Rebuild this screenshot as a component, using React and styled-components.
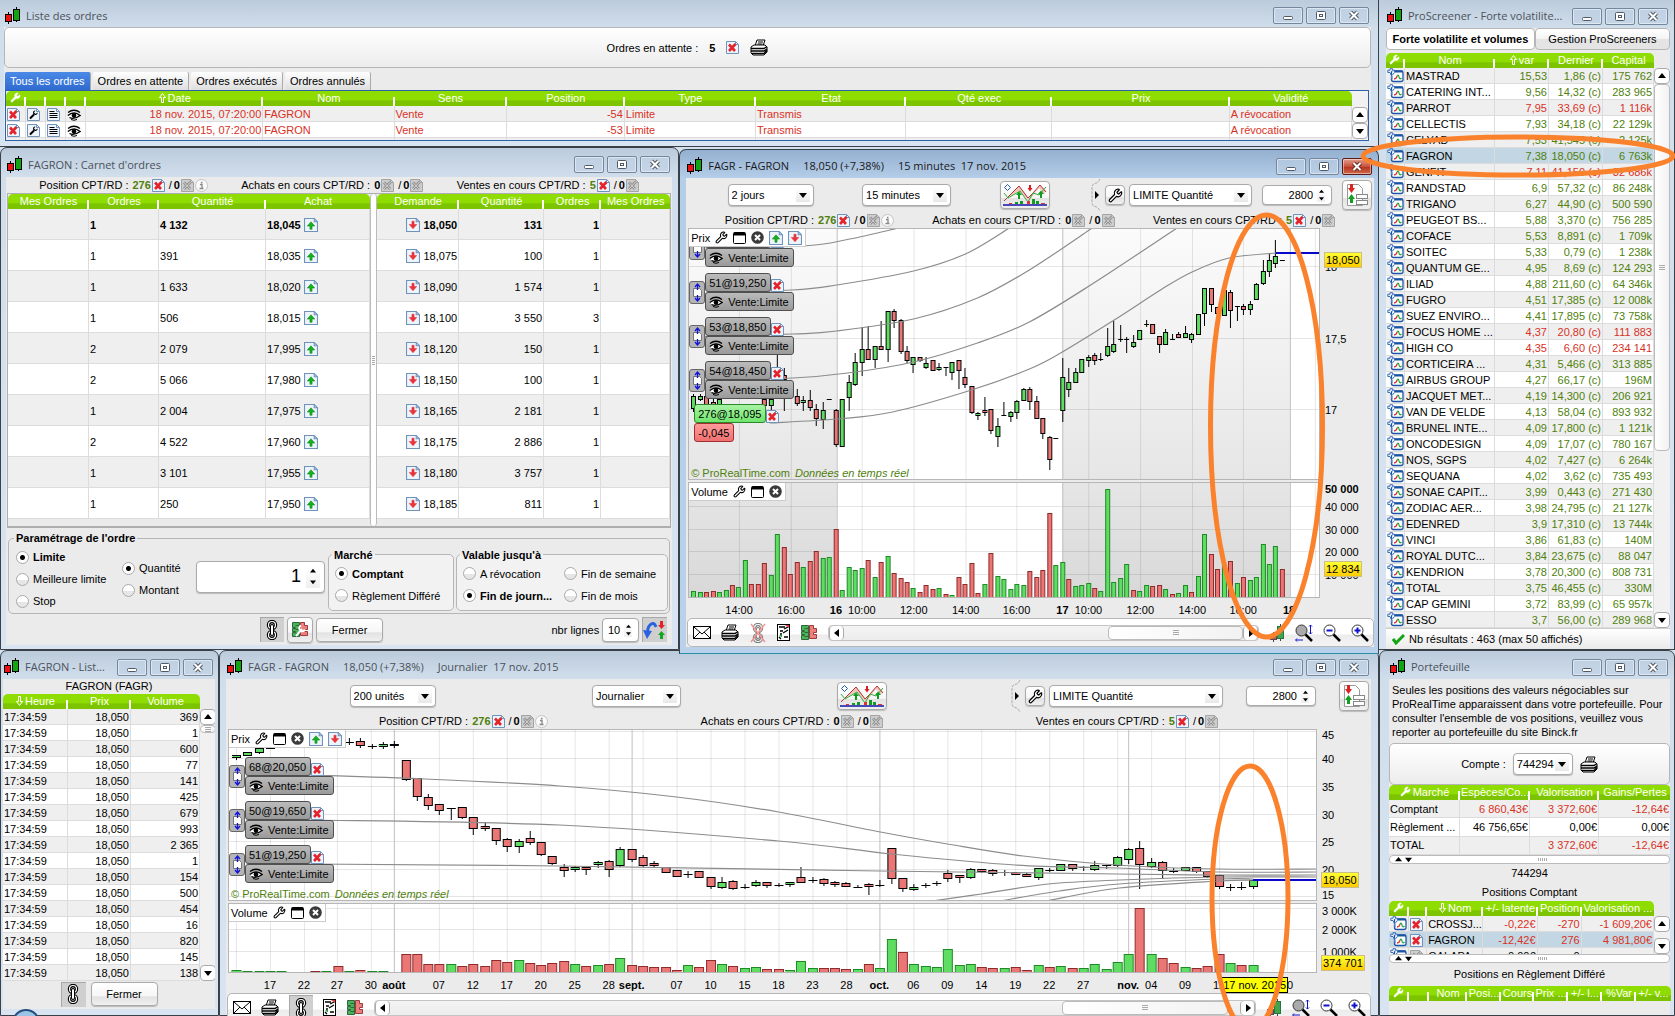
import React from "react";
import styled, { createGlobalStyle, css } from "styled-components";
import { Wrench } from "lucide-react";

/* ---------- palette ---------- */
const c = {
  body: "#ebebeb",
  line: "#b6b6b6",
  cell: "#dcdcdc",
  green: "#4f7f0c",
  red: "#d8321f",
  up: "#5fdc62",
  down: "#ea7676",
  orange: "#fb822c",
};

const Global = createGlobalStyle`
  * { box-sizing: border-box; }
  html, body { margin: 0; height: 100%; overflow: hidden; }
  body { background: #d3e0ee; font: 11px/14px "Liberation Sans", Arial, sans-serif; color: #000; }
  button, input, select { font: inherit; color: inherit; margin: 0; padding: 0; }
  p, h1, h2 { margin: 0; font: inherit; }
  svg { display: block; flex: none; }
`;

/* ---------- desktop ---------- */
const Desktop = styled.main`
  position: relative;
  display: flex;
  height: 100vh;
  overflow: hidden;
`;
const Column = styled.div`
  display: flex;
  flex-direction: column;
  min-width: 0;
  flex: ${(p) => (p.$width ? `0 0 ${p.$width}px` : 1)};
`;
const WindowRow = styled.div`
  display: flex;
  align-items: flex-start;
  min-width: 0;
  ${(p) => p.$last && "flex: 1; min-height: 0; align-items: stretch; margin-top: -4px;"}
`;

/* ---------- window chrome ---------- */
const Frame = styled.section`
  display: flex;
  flex-direction: column;
  min-width: 0;
  position: relative;
  border: 1px solid #3a4048;
  border-radius: 7px 7px 0 0;
  padding: ${(p) => p.$pad || "0 6px 4px 6px"};
  background: ${(p) =>
    p.$active
      ? "linear-gradient(#94b0d0, #b4cde8 28px, #b9d1ea)"
      : "linear-gradient(#bccbdb, #d0deec 28px, #d8e4f1)"};
  ${(p) => p.$active && "z-index: 1; margin-top: 2px; border-bottom-color: #2a8fa8;"}
  ${(p) => p.$top && "border-top: 0; border-left: 0; border-radius: 0;"}
  ${(p) => p.$grow && `flex: ${p.$grow};`}
  ${(p) => p.$width && `flex: 0 0 ${p.$width}px;`}
`;
const TitleBar = styled.header`
  display: flex;
  align-items: center;
  gap: 3px;
  flex: none;
  height: ${(p) => p.$h || 28}px;
  padding: 4px 2px 0 1px;
  color: ${(p) => (p.$active ? "#1a1a1a" : "#4b525a")};
`;
const Title = styled.h1`
  flex: 1;
  min-width: 0;
  display: flex;
  gap: 14px;
  padding-left: 2px;
  font: 11px/16px "Open Sans", "Noto Sans", sans-serif;
  white-space: pre;
  overflow: hidden;
`;
const WinButton = styled.button`
  width: 30px;
  height: 17px;
  flex: none;
  display: grid;
  place-items: center;
  border: 1px solid ${(p) => (p.$close ? "#5c1b18" : "#75879c")};
  border-radius: 2px;
  box-shadow: inset 0 0 0 1px rgba(255, 255, 255, 0.45);
  background: ${(p) => (p.$close ? "linear-gradient(#e0a08f, #c9513c 50%, #b5321c 52%, #cf6a4c)" : "rgba(190,208,228,.6)")};
`;
const Body = styled.div`
  display: flex;
  flex-direction: column;
  flex: 1;
  min-height: 0;
  min-width: 0;
  background: ${c.body};
`;

const AppIcon = () => (
  <svg width="16" height="18" viewBox="0 0 16 18">
    <path d="M3.5 5v12M11.5 0v15" stroke="#000" />
    <rect x="0.5" y="7.5" width="6" height="7" fill="#e11" stroke="#000" />
    <rect x="8.5" y="2.5" width="6" height="11" fill="#12a512" stroke="#000" />
  </svg>
);
const Glyph = ({ kind, light }) => {
  const stroke = light ? "#6d2a20" : "#505a66";
  return (
    <svg width="12" height="11" viewBox="0 0 12 11">
      {kind === "min" && <rect x="1.5" y="6.5" width="9" height="3" rx="1" fill="#fff" stroke={stroke} />}
      {kind === "max" && (
        <>
          <rect x="1.5" y="1.5" width="9" height="8" rx="1" fill="#fff" stroke={stroke} />
          <rect x="4.5" y="4.5" width="3" height="2" fill="#fff" stroke={stroke} />
        </>
      )}
      {kind === "close" && (
        <>
          <path d="M2.5 2l7 7M9.5 2l-7 7" stroke={stroke} strokeWidth="4" />
          <path d="M2.5 2l7 7M9.5 2l-7 7" stroke="#fff" strokeWidth="2" />
        </>
      )}
    </svg>
  );
};
function Window({ parts, active, titleHeight, children, ...rest }) {
  return (
    <Frame $active={active} {...rest}>
      <TitleBar $active={active} $h={titleHeight}>
        <AppIcon />
        <Title>
          {parts.map((t) => (
            <span key={t}>{t}</span>
          ))}
        </Title>
        <WinButton aria-label="Réduire"><Glyph kind="min" /></WinButton>
        <WinButton aria-label="Agrandir"><Glyph kind="max" /></WinButton>
        <WinButton aria-label="Fermer la fenêtre" $close={active}><Glyph kind="close" light={active} /></WinButton>
      </TitleBar>
      <Body>{children}</Body>
    </Frame>
  );
}

/* ---------- icons ---------- */
const Sheet = ({ grey }) => (
  <>
    <path
      d="M0.5 0.5h9l3 3v9h-12z"
      fill={grey ? "#cdcdcd" : "#eef4fb"}
      stroke={grey ? "#a5a5a5" : "#6f93bb"}
    />
    <path d="M9.5 0.5v3h3" fill="none" stroke={grey ? "#a5a5a5" : "#6f93bb"} />
  </>
);
const DocX = ({ grey }) => (
  <svg width="13" height="13" viewBox="0 0 13 13">
    <Sheet grey={grey} />
    <path d="M3 3.5l6 6.5M9.5 3l-6.500 7" stroke={grey ? "#8d8d8d" : "#e5232b"} strokeWidth="2.6" />
    {grey && <path d="M3 3.5l6 6.5M9.5 3l-6.5 7" stroke="#d9d9d9" strokeWidth="1" />}
  </svg>
);
const DocArrow = ({ down }) => (
  <svg width="14" height="14" viewBox="0 0 13 13">
    <Sheet />
    {down ? (
      <path d="M5.500 3h2v3h2.500L6.500 10 3 6h2.500z" fill="#e8333b" stroke="#e8333b" strokeWidth="0.5" />
    ) : (
      <path d="M5.500 10.500h2V7.500h2.500L6.500 3.500 3 7.500h2.500z" fill="#17b01f" stroke="#0d8a14" strokeWidth="0.5" />
    )}
  </svg>
);
const DocWrench = () => (
  <svg width="13" height="13" viewBox="0 0 13 13">
    <Sheet />
    <path d="M3 10.5L7 6.5" stroke="#000" strokeWidth="2" />
    <path d="M10.5 4.5L8.5 6 7 4.5 8.5 2.5C6 2 5.5 4.5 6.5 6.5 9 7.5 11 6.5 10.5 4.5z" fill="#000" />
  </svg>
);
const DocText = () => (
  <svg width="13" height="13" viewBox="0 0 13 13">
    <Sheet />
    <path d="M2.5 3.5h5M2.5 5.5h8M2.5 7.5h8M2.5 9.5h8" stroke="#000" />
  </svg>
);
const Eye = () => (
  <svg width="14" height="12" viewBox="0 0 14 12">
    <path d="M1 3.5Q7-1 13 3.5" fill="none" stroke="#000" strokeWidth="1.3" />
    <path d="M0.8 6.5Q7 1.5 13.2 6.5 7 11 2.5 8.5" fill="#fff" stroke="#000" strokeWidth="1.3" />
    <circle cx="7" cy="6.6" r="2.3" fill="#000" />
    <path d="M4 10.5q3 1.5 6 0" stroke="#000" fill="none" />
  </svg>
);
const InfoDot = () => (
  <svg width="13" height="13" viewBox="0 0 13 13">
    <circle cx="6.5" cy="6.5" r="6" fill="#fafafa" stroke="#c4c4c4" />
    <path d="M5 5.5h2v4M4.5 9.5h4M6 3.5h1.5" stroke="#888" strokeWidth="1.3" fill="none" />
  </svg>
);
const Printer = () => (
  <svg width="18" height="17" viewBox="0 0 18 17">
    <path d="M5 7L7 1h8l-2 6z" fill="#fff" stroke="#000" />
    <path d="M8 3h5M7.5 5h5" stroke="#000" />
    <path d="M1 8l3-2h11l2 2v5l-3 3H3l-2-2z" fill="#fff" stroke="#000" />
    <path d="M1 9.5h13l3-2M1 12h13l3-2M2 14.5h12l3-3" stroke="#000" strokeWidth="1.5" fill="none" />
  </svg>
);
const Envelope = () => (
  <svg width="18" height="13" viewBox="0 0 18 13">
    <rect x="0.5" y="0.5" width="17" height="12" fill="#fff" stroke="#000" />
    <path d="M1 1l8 7 8-7M1 12l6-6M17 12l-6-6" fill="none" stroke="#000" />
  </svg>
);
const Chain = ({ off }) => (
  <svg width="18" height="20" viewBox="0 0 18 20" opacity={off ? 0.5 : 1}>
    <ellipse cx="9" cy="5" rx="3.5" ry="3.5" fill="none" stroke="#000" strokeWidth="3.4" />
    <ellipse cx="9" cy="15" rx="3.5" ry="3.5" fill="none" stroke="#000" strokeWidth="3.4" />
    <ellipse cx="9" cy="5" rx="3.5" ry="3.5" fill="none" stroke="#fff" strokeWidth="1.2" />
    <ellipse cx="9" cy="15" rx="3.5" ry="3.5" fill="none" stroke="#fff" strokeWidth="1.2" />
    <rect x="7.5" y="4.5" width="3" height="11" rx="1.5" fill="#fff" stroke="#000" />
    {off && <path d="M2 1l14 18M16 1L2 19" stroke="#e33" strokeWidth="1.5" />}
  </svg>
);
const Checklist = () => (
  <svg width="13" height="17" viewBox="0 0 13 17">
    <rect x="0.5" y="0.5" width="12" height="16" fill="#fff" stroke="#000" />
    <path d="M2 3h6M3 7h3M3 10h2M7 13h4" stroke="#000" strokeWidth="1.5" />
    <path d="M7 5l4-2M6 9l5-3M2 13l2 2" stroke="#000" strokeWidth="1.3" />
    <path d="M2 12l3-2v3z" fill="#1b9d2b" />
    <path d="M8 1h4v3z" fill="#e33" />
  </svg>
);
const BookIcon = ({ tool }) => (
  <svg width="18" height="17" viewBox="0 0 18 17">
    <path d="M1.5 1.5h7v14h-7v-4h3v-1h-3v-3h3v-1h-3z" fill="#47b45a" stroke="#33653b" />
    <path d="M9.5 1.5h4v3h3v4h-3v2h3v4h-7z" fill="#ee7d7d" stroke="#9a3c3c" />
    <path d="M4.500 4.5h5M4.500 8.500h5M4.500 12.500h5" stroke="#33653b" />
    {tool && <path d="M5 15l6-7M10 4.500a3 3 0 1 0 4 4" stroke="#fff" strokeWidth="2" fill="none" />}
  </svg>
);
const ChainChart = () => (
  <svg width="17" height="15" viewBox="0 0 17 15">
    <rect x="4.5" y="3" width="11.500" height="10.500" rx="2" fill="#fff" stroke="#1c54a4" strokeWidth="1.3" />
    <path d="M8 3.500h8" stroke="#1c54a4" strokeWidth="2" />
    <path d="M7 11q2.500 0 3-3" fill="none" stroke="#d33" strokeWidth="1.3" />
    <path d="M10 8q1.500-2 2 1t2.500 1" fill="none" stroke="#22a63a" strokeWidth="1.3" />
    <path d="M3 0.700v1.500H0.800v2.300H3L5 8.500v3M5.500 0.700h-2.500M5.500 0.700v1.500h2v2.300L5 7.500" fill="#e4effb" stroke="#3a6fc0" />
  </svg>
);
const ArrowGlyph = ({ down }) => (
  <svg width="7" height="10" viewBox="0 0 7 10">
    <path
      d={down ? "M2.5 0.5h2v5h2l-3 4-3-4h2z" : "M2.5 9.5h2v-5h2l-3-4-3 4h2z"}
      fill="none" stroke="#fff"
    />
  </svg>
);
const PanelIcon = () => (
  <svg width="13" height="12" viewBox="0 0 13 12">
    <rect x="0.5" y="0.5" width="12" height="11" rx="1" fill="#fff" stroke="#000" />
    <path d="M1 2h11" stroke="#000" strokeWidth="3" />
  </svg>
);
const CloseDot = () => (
  <svg width="13" height="13" viewBox="0 0 13 13">
    <circle cx="6.5" cy="6.5" r="6.3" fill="#3b3b3b" />
    <path d="M4 4l5 5M9 4l-5 5" stroke="#fff" strokeWidth="2" />
  </svg>
);
const Lens = ({ sign }) => (
  <svg width="18" height="18" viewBox="0 0 18 18">
    <circle cx="6.5" cy="6.5" r="5.5" fill={sign ? "#fff" : "#aaa"} stroke="#333" />
    <path d="M10.5 10.5l6.5 6.5" stroke="#000" strokeWidth="2.5" />
    {sign && <path d="M3.5 6.5h6" stroke="#11c" strokeWidth="2" />}
    {sign === "+" && <path d="M6.5 3.5v6" stroke="#11c" strokeWidth="2" />}
    {!sign && <path d="M1 16h7M2 14.5L0.5 16 2 17.5M15.5 1v9M14 2.5L15.5 1 17 2.5M14 8.5l1.5 1.5 1.5-1.5" stroke="#11c" fill="none" />}
  </svg>
);
const CandleTool = () => (
  <svg width="16" height="18" viewBox="0 0 16 18">
    <path d="M4.5 8v10M11.5 0v17" stroke="#444" />
    <rect x="1.5" y="10.5" width="6" height="5" fill="#a66" stroke="#644" />
    <rect x="8.5" y="2.5" width="6" height="12" fill="#3fa44a" stroke="#274" />
  </svg>
);
const Indicators = () => (
  <svg width="44" height="22" viewBox="0 0 44 22">
    <path d="M1 17L8 10 16 2 21 8 25 14 30 9 37 1 43 7 41 10 36 4 26 17 16 7 4 14z" fill="#f3c5bf" />
    <path d="M1 17L8 10 16 2 25 14 30 9 37 1 43 8" fill="none" stroke="#b2322e" />
    <path d="M1 9l4 5 12-7 8 11 5-9 6 2 7-8" fill="none" stroke="#2eae3a" />
    <path d="M4.5 0.5l3 3-3 3-3-3z" fill="#fff" stroke="#2255bb" />
    <path d="M26 1h2v3h1.5L27 7.5 24.5 4H26z" fill="#d81e1e" />
    <path d="M15 15v-4h-2l3-3.5 3 3.5h-2v4zM37 14v-4h-2l3-3.5 3 3.5h-2v4z" fill="#139a22" />
    <path d="M6 20v-1h3v1zM24 20v-3h3v3zM38 20v-1h4v1z" fill="#d33" />
    <path d="M12 20v-2h3v2zM17 20v-3h3v3zM29 20v-5h3v5zM33 20v-3h3v3z" fill="#139a22" />
    <path d="M0 21h44" stroke="#1212a8" strokeWidth="1.5" />
  </svg>
);
const SplitDoc = () => (
  <svg width="24" height="24" viewBox="0 0 24 24">
    <path d="M2.5 1.5h11l4 4v17h-15z" fill="#fff" stroke="#999" />
    <path d="M5 1h3v4h2L6.5 10 3 5h2z" fill="#de2222" />
    <path d="M5 20h3v-4h2l-3.5-5L3 16h2z" fill="#12a11f" />
    <rect x="11.5" y="11.5" width="11" height="4" fill="#fff" stroke="#888" />
    <rect x="11.5" y="17.5" width="11" height="4" fill="#fff" stroke="#888" />
  </svg>
);
const Recenter = () => (
  <svg width="23" height="20" viewBox="0 0 23 20">
    <path d="M13 7Q11 1 7 5 4 8 5 13" fill="none" stroke="#2b62e0" strokeWidth="3" />
    <path d="M0 10l9 1-5 8z" fill="#2b62e0" />
    <path d="M17 1h3v4h2l-3.5 4L15 5h2z" fill="#e02424" />
    <path d="M17 19h3v-4h2l-3.5-4L15 15h2z" fill="#14a522" />
  </svg>
);
const MoveIcon = () => (
  <svg width="9" height="19" viewBox="0 0 9 19">
    <path d="M0.5 5.5h6l2 2v6h-8z" fill="#fff" stroke="#777" />
    <path d="M4.5 1v6M4.5 18v-6M2 4l2.5-3L7 4M2 15l2.5 3L7 15" stroke="#1414d8" strokeWidth="1.3" fill="none" />
  </svg>
);
const Triangle = ({ dir = "down", size = 8 }) => {
  const d = { down: "M0 2h8L4 7z", up: "M0 6h8L4 1z", left: "M6 0v8L1 4z", right: "M2 0v8l5-4z" }[dir];
  return (
    <svg width={size} height={size} viewBox="0 0 8 8">
      <path d={d} fill="#000" />
    </svg>
  );
};
const Check = () => (
  <svg width="13" height="12" viewBox="0 0 13 12">
    <path d="M1 6l3 4L12 2" fill="none" stroke="#14a514" strokeWidth="3" />
  </svg>
);

/* ---------- controls ---------- */
const raised = css`
  border: 1px solid #aaa;
  border-radius: 4px;
  background: linear-gradient(#fff, #f6f6f6 60%, #e2e2e2 62%, #f0f0f0);
  box-shadow: 0 1px 1px #bbb;
`;
const PushButton = styled.button`
  ${raised}
  width: 67px;
  height: 24px;
`;
const IconButton = styled.button`
  ${(p) => (p.$pressed ? "border: 0; background: #cfcfcf; box-shadow: inset 1px 1px 0 #a8a8a8;" : raised)}
  display: grid;
  place-items: center;
  flex: none;
  width: ${(p) => p.$w}px;
  height: ${(p) => p.$h}px;
`;
const BareButton = styled.button`
  display: flex;
  border: 0;
  background: none;
`;
const SelectBox = styled.label`
  position: relative;
  display: flex;
  flex: none;
  width: ${(p) => p.$w}px;
  height: 22px;
  border: 1px solid #aaa;
  border-radius: 4px;
  background: #fff;
  box-shadow: 0 1px 1px #bbb;
  select {
    appearance: none;
    width: 100%;
    border: 0;
    background: none;
    padding-left: 3px;
    outline: 0;
  }
  span {
    position: absolute;
    right: 3px;
    top: 3px;
    width: 14px;
    height: 14px;
    display: grid;
    place-items: center;
    background: linear-gradient(#fff, #e8e8e8);
    pointer-events: none;
  }
`;
const Select = ({ value, w, label }) => (
  <SelectBox $w={w}>
    <select aria-label={label} defaultValue={value}>
      <option>{value}</option>
    </select>
    <span><Triangle /></span>
  </SelectBox>
);
const SpinBox = styled.label`
  display: flex;
  align-items: center;
  flex: none;
  width: ${(p) => p.$w}px;
  height: ${(p) => p.$h || 20}px;
  padding-right: ${(p) => (p.$big ? 4 : 6)}px;
  gap: ${(p) => (p.$big ? 5 : 4)}px;
  border: 1px solid #aaa;
  border-radius: 4px;
  background: #fff;
  box-shadow: 0 1px 1px #bbb;
  input {
    flex: 1;
    min-width: 0;
    border: 0;
    outline: 0;
    background: none;
    text-align: right;
    ${(p) => p.$big && "font-size: 18px;"}
  }
  span {
    display: flex;
    flex-direction: column;
    align-items: center;
    justify-content: space-around;
    width: ${(p) => (p.$big ? 14 : 8)}px;
    height: ${(p) => (p.$big ? 22 : 14)}px;
    background: linear-gradient(#fff, #efefef);
  }
`;
const Spin = ({ value, w, h, big, label }) => (
  <SpinBox $w={w} $h={h} $big={big}>
    <input aria-label={label} defaultValue={value} />
    <span>
      <Triangle dir="up" size={big ? 6 : 5} />
      <Triangle size={big ? 6 : 5} />
    </span>
  </SpinBox>
);
const RadioLabel = styled.label`
  display: flex;
  align-items: center;
  gap: 4px;
  height: 22px;
  white-space: nowrap;
  font-weight: ${(p) => (p.$strong ? "bold" : "normal")};
  input {
    appearance: none;
    flex: none;
    width: 13px;
    height: 13px;
    border: 1px solid #aaa;
    border-radius: 50%;
    background: linear-gradient(#fff 50%, #e6e6e6 52%);
  }
  input:checked {
    background: radial-gradient(circle, #000 2px, #fff 3px);
  }
`;
const Radio = ({ name, text, checked, strong }) => (
  <RadioLabel $strong={strong}>
    <input type="radio" name={name} defaultChecked={checked} />
    {text}
  </RadioLabel>
);

/* ---------- position summary ---------- */
const SummaryRow = styled.div`
  display: flex;
  justify-content: space-evenly;
  align-items: center;
  flex: none;
  height: 16px;
  white-space: nowrap;
`;
const SummaryItem = styled.div`
  display: flex;
  align-items: center;
  gap: 1px;
  b { margin-left: 3px; }
  i { font-style: normal; margin-left: 3px; }
  i + b { margin-left: 1px; }
`;
const Positive = styled.b`
  color: ${c.green};
`;
const Summary = () => (
  <SummaryRow>
    <SummaryItem>
      Position CPT/RD :<Positive>276</Positive><DocX /><i>/</i><b>0</b><DocX grey /><InfoDot />
    </SummaryItem>
    <SummaryItem>
      Achats en cours CPT/RD :<b>0</b><DocX grey /><i>/</i><b>0</b><DocX grey />
    </SummaryItem>
    <SummaryItem>
      Ventes en cours CPT/RD :<Positive>5</Positive><DocX /><i>/</i><b>0</b><DocX grey />
    </SummaryItem>
  </SummaryRow>
);

/* ---------- tables ---------- */
const Table = styled.table`
  table-layout: fixed;
  width: 100%;
  border-collapse: separate;
  border-spacing: 0;
  white-space: nowrap;
  th {
    height: 15px;
    padding: 0 1px;
    font-weight: normal;
    line-height: 13px;
    color: #fff;
    overflow: hidden;
    background: linear-gradient(#8fdc00 0 62%, #7cc400 64%);
  }
  th:not(:last-child) {
    background: linear-gradient(#fff, #fff) right bottom / 2px 9px no-repeat,
      linear-gradient(#8fdc00 0 62%, #7cc400 64%);
  }
  th:first-child { border-top-left-radius: 5px; }
  th:last-child { border-top-right-radius: 5px; }
  th svg { display: inline-block; vertical-align: -1px; margin-right: 2px; }
  td {
    height: ${(p) => p.$row || 16}px;
    padding: ${(p) => (p.$row === 31 ? 1 : 0)}px 1px 0;
    border-right: 1px solid ${c.cell};
    border-bottom: 1px solid ${c.cell};
    overflow: hidden;
  }
  td svg { display: inline-block; vertical-align: -3px; }
`;
const Row = styled.tr`
  background: ${(p) => (p.$selected ? "#c2d7e3" : p.$odd ? "#fff" : "#efefef")};
  ${(p) => p.$strong && "font-weight: bold;"}
`;
const Cell = styled.td`
  color: ${(p) => p.$color || "inherit"};
  text-align: ${(p) => (p.$right ? "right" : p.$center ? "center" : "left")};
`;
const Cols = ({ widths }) => (
  <colgroup>
    {widths.map((w, i) => (
      <col key={i} style={{ width: w }} />
    ))}
  </colgroup>
);
const HeadWrench = () => <Wrench size={11} color="#fff" fill="#fff" strokeWidth={1} aria-hidden />;

const Scroll = styled.div`
  display: flex;
  flex-direction: column;
  flex: none;
  width: 16px;
  background: #f1f1f1;
`;
const ScrollButton = styled.button`
  border: 1px solid #aaa;
  border-radius: 4px;
  background: #fff;
  display: grid;
  place-items: center;
  flex: none;
  width: 16px;
  height: 16px;
`;
const Thumb = styled.div`
  flex: ${(p) => p.$size};
  border: 1px solid #bbb;
  border-radius: 4px;
  background: linear-gradient(90deg, #fff, #f2f2f2);
  display: grid;
  place-items: center;
`;
const Gap = styled.div`
  flex: ${(p) => p.$size};
`;
const Grip = styled.i`
  width: 6px;
  height: 5px;
  border: 1px solid #aaa;
  border-width: 1px 0;
  background: linear-gradient(transparent 1px, #aaa 1px 2px, transparent 2px);
`;

/* ---------- orders list ---------- */
const Panel = styled.div`
  display: flex;
  align-items: center;
  justify-content: center;
  flex: none;
  gap: ${(p) => p.$gap}px;
  height: ${(p) => p.$h || 41}px;
  border: 1px solid ${c.line};
  border-radius: 5px;
  background: linear-gradient(#fff, #ececec);
`;
const Tabs = styled.div`
  display: flex;
  align-items: flex-end;
  gap: 2px;
  height: 22px;
  padding-left: 1px;
`;
const Tab = styled.button`
  height: 18px;
  padding: 0 5px;
  white-space: nowrap;
  border: 0;
  border-right: 1px solid #aaa;
  border-radius: 2px 2px 0 0;
  background: ${(p) => (p.$on ? "linear-gradient(#4a8ae6, #2f6bd0)" : "linear-gradient(#fff, #dedede)")};
  color: ${(p) => (p.$on ? "#fff" : "#000")};
`;
const Framed = styled.div`
  display: flex;
  margin: 0 2px 0 1px;
  height: 51px;
  overflow: hidden;
  border: 1px solid #2d62a8;
  background: #efefef;
`;
const OrdersScroll = styled(Scroll)`
  padding-top: 16px;
`;
const IconCell = styled(Cell)`
  && { padding: 0 1px; }
`;

function OrdersWindow() {
  const heads = ["Date", "Nom", "Sens", "Position", "Type", "Etat", "Qté exec", "Prix", "Validité"];
  const rows = ["-54", "-53", ""];
  return (
    <Window parts={["Liste des ordres"]} $top $pad="0 7px 5px 4px" titleHeight={27}>
      <Panel $gap={11}>
        <span>Ordres en attente :</span><b>5</b><DocX /><Printer />
      </Panel>
      <Tabs>
        <Tab $on>Tous les ordres</Tab>
        <Tab>Ordres en attente</Tab>
        <Tab>Ordres exécutés</Tab>
        <Tab>Ordres annulés</Tab>
      </Tabs>
      <Framed>
        <Table>
          <Cols widths={[20, 20, 20, 20, 177, 131, 112, 118, 131, 150, 146, 177, 122]} />
          <thead>
            <tr>
              <th><HeadWrench /></th><th /><th /><th />
              {heads.map((h, i) => (
                <th key={h}>{i === 0 && <ArrowGlyph />}{h}</th>
              ))}
            </tr>
          </thead>
          <tbody>
            {rows.map((pos, i) =>
              pos ? (
                <Row key={i} $odd={i % 2}>
                  <Cell><DocX /></Cell><Cell><DocWrench /></Cell><Cell><DocText /></Cell><Cell><Eye /></Cell>
                  <Cell $right $color={c.red}>18 nov. 2015, 07:20:00</Cell>
                  <Cell $color={c.red}>FAGRON</Cell>
                  <Cell $color={c.red}>Vente</Cell>
                  <Cell $right $color={c.red}>{pos}</Cell>
                  <Cell $color={c.red}>Limite</Cell>
                  <Cell $color={c.red}>Transmis</Cell>
                  <Cell /><Cell />
                  <Cell $color={c.red}>A révocation</Cell>
                </Row>
              ) : (
                <Row key={i}>
                  {Array.from({ length: 13 }, (_, k) => <Cell key={k} />)}
                </Row>
              )
            )}
          </tbody>
        </Table>
        <OrdersScroll>
          <ScrollButton aria-label="Monter"><Triangle dir="up" /></ScrollButton>
          <ScrollButton aria-label="Descendre"><Triangle /></ScrollButton>
        </OrdersScroll>
      </Framed>
    </Window>
  );
}

/* ---------- order book ---------- */
const Book = styled.div`
  display: flex;
  flex: none;
  margin: 0 1px;
  border: 1px solid #aeaeae;
  border-bottom-width: 2px;
  padding-bottom: 7px;
`;
const BookSide = styled.div`
  flex: ${(p) => p.$size};
  min-width: 0;
`;
const Splitter = styled.div`
  flex: 0 0 7px;
  margin-bottom: -7px;
  border: 1px solid #bbb;
  border-width: 0 1px;
  border-radius: 4px;
  background: #fff;
  display: grid;
  place-items: center;
  i { width: 3px; height: 9px; background: repeating-linear-gradient(#aaa 0 1px, #fff 1px 2px); }
`;
const AskLine = styled.span`
  margin-left: 3px;
`;
const OrderForm = styled.fieldset`
  display: flex;
  align-items: center;
  flex: none;
  margin: 3px 2px 0;
  padding: 1px 1px 1px 7px;
  border: 1px solid ${c.line};
  border-radius: 5px;
  legend { padding: 0 2px; margin-left: -2px; font-weight: bold; }
`;
const SubForm = styled.fieldset`
  flex: ${(p) => p.$flex};
  display: grid;
  grid-template-columns: ${(p) => (p.$two ? "101px 1fr" : "1fr")};
  margin: 0 0 0 ${(p) => (p.$two ? 2 : 3)}px;
  padding: 1px 0 3px 6px;
  border: 1px solid ${c.line};
  border-radius: 5px;
  background: #f2f2f2;
  legend { margin-left: -3px; font-weight: bold; }
`;
const RadioStack = styled.div`
  flex: 0 0 ${(p) => p.$w}px;
`;
const AmountSlot = styled.div`
  padding-bottom: 5px;
`;
const BookFooter = styled.div`
  display: grid;
  grid-template-columns: 254fr auto 284fr;
  align-items: center;
  height: 31px;
  padding-right: 5px;
`;
const Cluster = styled.div`
  display: flex;
  align-items: center;
  gap: 3px;
  ${(p) => p.$end && "justify-content: flex-end;"}
`;
const bids = [[1, "4 132", "18,045"], [1, "391", "18,035"], [1, "1 633", "18,020"], [1, "506", "18,015"], [2, "2 079", "17,995"], [2, "5 066", "17,980"], [1, "2 004", "17,975"], [2, "4 522", "17,960"], [1, "3 101", "17,955"], [1, "250", "17,950"]];
const asks = [["18,050", "131", 1], ["18,075", "100", 1], ["18,090", "1 574", 1], ["18,100", "3 550", 3], ["18,120", "150", 1], ["18,150", "100", 1], ["18,165", "2 181", 1], ["18,175", "2 886", 1], ["18,180", "3 757", 1], ["18,185", "811", 1]];

function BookWindow() {
  return (
    <Window parts={["FAGRON : Carnet d'ordres"]} $grow="679 0 0" titleHeight={29} $pad="0 6px 4px 5px">
      <Summary />
      <Book>
        <BookSide $size={362}>
          <Table $row={31}>
            <Cols widths={[81, 70, 107, 104]} />
            <thead><tr><th>Mes Ordres</th><th>Ordres</th><th>Quantité</th><th>Achat</th></tr></thead>
            <tbody>
              {bids.map(([n, q, p], i) => (
                <Row key={p} $odd={i % 2} $strong={i === 0}>
                  <Cell /><Cell>{n}</Cell><Cell>{q}</Cell>
                  <Cell>{p} <DocArrow /></Cell>
                </Row>
              ))}
            </tbody>
          </Table>
        </BookSide>
        <Splitter><i /></Splitter>
        <BookSide $size={293}>
          <Table $row={31}>
            <Cols widths={[82, 85, 57, 69]} />
            <thead><tr><th>Demande</th><th>Quantité</th><th>Ordres</th><th>Mes Ordres</th></tr></thead>
            <tbody>
              {asks.map(([p, q, n], i) => (
                <Row key={p} $odd={i % 2} $strong={i === 0}>
                  <Cell $right><DocArrow down /><AskLine>{p}</AskLine></Cell>
                  <Cell $right>{q}</Cell><Cell $right>{n}</Cell><Cell />
                </Row>
              ))}
            </tbody>
          </Table>
        </BookSide>
      </Book>
      <OrderForm>
        <legend>Paramétrage de l'ordre</legend>
        <RadioStack $w={106}>
          <Radio name="kind" text="Limite" checked strong />
          <Radio name="kind" text="Meilleure limite" />
          <Radio name="kind" text="Stop" />
        </RadioStack>
        <RadioStack $w={74}>
          <Radio name="unit" text="Quantité" checked />
          <Radio name="unit" text="Montant" />
        </RadioStack>
        <AmountSlot><Spin value="1" w={129} h={32} big label="Quantité à passer" /></AmountSlot>
        <SubForm $flex="0 0 126px">
          <legend>Marché</legend>
          <Radio name="market" text="Comptant" checked strong />
          <Radio name="market" text="Règlement Différé" />
        </SubForm>
        <SubForm $flex="1" $two>
          <legend>Valable jusqu'à</legend>
          <Radio name="valid" text="A révocation" />
          <Radio name="valid" text="Fin de semaine" />
          <Radio name="valid" text="Fin de journ..." checked strong />
          <Radio name="valid" text="Fin de mois" />
        </SubForm>
      </OrderForm>
      <BookFooter>
        <span />
        <Cluster>
          <IconButton $pressed $w={24} $h={25} aria-label="Lier"><Chain /></IconButton>
          <IconButton $w={26} $h={26} aria-label="Options du carnet"><BookIcon tool /></IconButton>
          <PushButton>Fermer</PushButton>
        </Cluster>
        <Cluster $end>
          <span>nbr lignes</span>
          <Spin value="10" w={37} h={24} label="nbr lignes" />
          <IconButton $pressed $w={25} $h={25} aria-label="Recentrer"><Recenter /></IconButton>
        </Cluster>
      </BookFooter>
    </Window>
  );
}

/* ---------- charts ---------- */
const Toolbar = styled.div`
  display: flex;
  align-items: center;
  flex: none;
  height: 34px;
  padding-right: 2px;
`;
const ToolGroup = styled.div`
  display: flex;
  align-items: center;
  gap: ${(p) => p.$gap}px;
`;
const Bracket = () => (
  <svg width="10" height="34" viewBox="0 0 10 34">
    <path d="M9 1q-2 4-5 4.5Q1 6 1 10v14q0 4 3 4.5 3 .5 5 4.5" fill="none" stroke="#aaa" strokeDasharray="3 1" />
    <path d="M4 13v8l4-4z" fill="#000" />
  </svg>
);
const ChartGrid = styled.div`
  display: grid;
  grid-template-columns: 1fr 54px;
  grid-template-rows: auto auto 18px;
  row-gap: 2px;
  flex: none;
  margin-left: 2px;
`;
const Plot = styled.div`
  position: relative;
  overflow: hidden;
  height: ${(p) => p.$h}px;
  border: 1px solid ${c.line};
  background: #fff;
`;
const Axis = styled.div`
  position: relative;
`;
const Pin = styled.span`
  position: absolute;
  white-space: nowrap;
  line-height: 14px;
  ${(p) => p.$strong && "font-weight: bold;"}
  ${(p) => p.$side && "left: 5px; transform: translateY(-50%);"}
  ${(p) => p.$below && "top: 3px; transform: translateX(-50%);"}
  ${(p) => p.$mark && "left: 4px; padding: 0 1px; background: linear-gradient(#ff3, #fc0); border: 1px solid #c9bd8a; "}
`;
const DatePin = styled(Pin)`
  top: 2px;
  right: 29px;
  padding: 0 1px;
  border: 1px solid #000;
  background: #ff0;
`;
const PlotTools = styled.div`
  position: absolute;
  z-index: 2;
  top: -1px;
  left: 0;
  display: flex;
  align-items: center;
  gap: 5px;
  height: 19px;
  padding: 0 3px 0 2px;
  background: #fff;
  border: 1px solid #ccc;
  border-left: 0;
`;
const Credit = styled.p`
  position: absolute;
  left: 2px;
  bottom: -1px;
  color: ${c.green};
  i { margin-left: 2px; }
`;
const TagBox = styled.div`
  position: absolute;
  left: 0;
  display: grid;
  grid-template-columns: 16px auto 1fr;
  justify-items: start;
`;
const TagPart = styled.div`
  display: flex;
  align-items: center;
  gap: 5px;
  height: 19px;
  padding: 0 4px 0 3px;
  white-space: nowrap;
  border: 1px solid ${(p) => (p.$tone === "green" ? "#2a8a2a" : p.$tone === "red" ? "#a03030" : "#505050")};
  border-radius: 3px;
  background: ${(p) =>
    p.$tone === "green" ? "linear-gradient(#a8f3a4, #6fe56c)" : p.$tone === "red" ? "linear-gradient(#ff9b9b, #f07070)" : "linear-gradient(#bbb, #9a9a9a)"};
  ${(p) => p.$wide && "grid-column: 2 / 4;"}
`;
const Handle = styled.div`
  grid-row: 1 / 3;
  align-self: center;
  display: grid;
  place-items: center;
  width: 16px;
  height: 23px;
  border: 1px solid #666;
  border-radius: 3px;
  background: #b5b5b5;
`;
const TagClose = styled(BareButton)`
  align-self: end;
`;
const PositionTag = styled.div`
  position: absolute;
  left: 5px;
  display: grid;
  grid-template-columns: auto auto;
  justify-items: start;
`;
function OrderTag({ text, top }) {
  return (
    <TagBox style={{ top }}>
      <Handle><MoveIcon /></Handle>
      <TagPart>{text}</TagPart>
      <TagClose aria-label={`Annuler ${text}`}><DocX /></TagClose>
      <TagPart $wide><Eye />Vente:Limite</TagPart>
    </TagBox>
  );
}

const parse = (s) =>
  s.trim().split(/\s+/).map((t) => (t === "-" ? null : { kind: t[0], v: t.slice(1).split(",").map(Number) }));

/* body top, body bottom, high, low for each bar; d = doji: level, high, low. Unit: a third of a pixel */
const candles15 = parse(`g739,776,735,784 g739,748,735,752 r740,766,735,770 r757,768,750,770 g748,768,748,770 - - - - - -
 r748,766,748,768 g750,768,745,778 d660,618,678 r676,690,655,783 d735,720,748 r739,762,718,768 g751,758,740,783 r751,773,721,781
 r778,806,765,827 g781,808,757,836 d748,748,748 r781,884,778,890 g748,889,748,890 g697,742,676,781 g637,703,610,706 g598,637,533,676
 r598,628,529,630 g589,628,589,654 r589,598,515,600 g484,598,484,635 r484,512,478,532 r511,604,508,611 r604,631,590,637 g622,643,622,668
 r622,632,622,634 g640,653,622,655 r631,661,631,661 g652,658,640,663 d654,652,680 g637,667,637,690 r631,661,631,716 r682,703,655,712
 r709,787,709,790 g790,796,788,808 r781,788,742,796 r778,841,778,850 g829,860,805,890 d797,757,800 g787,799,784,814 g754,787,751,805
 g718,751,715,752 r718,754,712,778 r754,805,740,805 r805,850,805,866 r862,929,859,960 d865,865,865 g682,781,625,815 g697,718,655,740
 g667,697,655,697 g628,667,628,667 g622,631,618,650 r616,631,610,643 d629,610,634 g589,616,535,620 g583,605,514,608 d569,527,578
 d569,562,611 g577,589,556,592 g541,569,541,569 d523,511,533 r523,550,523,550 r559,583,559,608 g547,583,538,585 d568,553,570
 r553,562,547,564 g550,562,529,563 g553,569,550,577 g493,553,493,553 g415,490,415,527 r415,463,415,485 r472,490,472,495 g421,496,421,496
 r427,481,421,533 d469,469,515 r469,478,463,493 g463,478,454,493 g403,448,400,450 g364,400,331,404 g331,364,312,379 g319,341,271,352 d331,331,331`);
const volumes15 = parse(`g334 g337 r337 r334 g337 g331 r316 g322 g241 r313 r313 r250 g286 g163 r202 r283 r247 g262 r244 r214 g235 g232 r148 g331 g262 g271 g265
 r241 g292 r247 g229 r280 r295 r307 g325 r337 r316 r328 g325 r343 g346 r292 r313 r250 r340 g313 r220 g289 g298 g328 g313 g316 r274 r292 r271 r100
 g256 g247 r298 g319 g316 g310 r325 g334 g28 g307 g295 g253 r331 g334 g316 r319 r316 g328 r343 g340 g316 r337 g289 g163 r223 r268 g256 r244 g310
 r292 g301 g292 g193 g253 g199 r268`);
const candlesDay = parse(`g331,337,331,341 g322,331,322,331 g310,322,310,325 d310,310,310 - - - - - - d291,279,300 r289,301,280,305 d302,297,311
 g298,304,291,308 g296,301,288,306 r344,402,344,406 r398,454,398,466 r455,481,448,493 r478,496,478,506 d490,490,524 r487,515,487,518
 r517,550,517,566 r544,549,530,556 r550,586,550,596 r583,602,580,619 g589,602,583,620 r580,592,559,598 r592,626,592,630 r634,653,634,657
 r667,676,658,692 g667,673,663,679 r667,673,667,686 g652,658,648,666 r649,673,645,692 g613,659,606,663 r613,643,613,648 r637,661,630,663
 r655,661,649,667 r665,682,665,682 r676,692,676,692 d686,679,698 r679,695,679,695 r697,724,697,728 g712,725,697,728 r709,728,705,732
 d725,718,732 g712,721,705,723 r710,721,710,725 d721,715,726 g712,718,712,722 r697,710,666,710 d705,697,714 r703,715,700,719 r712,718,709,723
 r715,724,712,724 d725,720,728 r718,724,714,747 d721,705,726 r610,700,610,714 r700,728,700,738 g725,731,718,734 d719,715,728 d713,708,724
 r685,700,675,708 r691,696,691,711 g673,695,670,700 r671,677,671,682 r676,685,673,691 d680,675,692 r680,688,680,688 r688,694,685,694
 g670,697,670,702 d674,668,682 g658,676,658,676 r658,670,658,675 d667,662,678 g661,671,648,675 d660,660,672 g637,661,632,664 g613,643,608,655
 r610,658,588,728 g652,662,640,667 r652,674,648,698 d677,670,684 g667,676,667,676 r667,677,667,680 r679,692,679,697 r691,724,691,730
 d726,717,737 d725,712,734 g706,724,706,728`);
const volumesDay = parse(`g976 g979 g979 g979 g979 r982 g982 r979 g979 r964 g979 r976 g979 g979 g982 r928 r928 r958 r958 g958 r964 r958 r964 r946 r952 g946
 r955 r961 r955 r949 g958 r964 g961 r958 g940 r961 r964 r967 r967 r976 g961 r967 r946 g958 r964 g970 g967 r973 r973 g976 g949 g970 r970 r970 r973
 g973 r958 g970 g883 r922 g958 g964 g967 g913 g961 g958 r967 r970 g970 r967 r976 g961 r967 g964 r970 g970 g958 g973 g952 g928 r790 g928 r940 r955
 g967 r970 r964 r928 g955 r961 g961`);

/* smooth line through the given points */
const smooth = (pts) =>
  pts.reduce((d, p, i) => {
    if (i === 0) return `M${p[0]} ${p[1]}`;
    const a = pts[i - 2] || pts[i - 1];
    const b = pts[i - 1];
    const n = pts[i + 1] || p;
    return `${d}C${b[0] + (p[0] - a[0]) / 6} ${b[1] + (p[1] - a[1]) / 6} ${p[0] - (n[0] - b[0]) / 6} ${p[1] - (n[1] - b[1]) / 6} ${p[0]} ${p[1]}`;
  }, "");

const fills = { g: c.up, r: c.down };

function Candles({ data, x0, step, half, top }) {
  const y = (v) => Math.round((v - top) / 3);
  return data.map((b, i) => {
    if (!b) return null;
    const x = Math.floor(x0 + i * step) + 0.5;
    if (b.kind === "d") {
      const [m, hi, lo] = b.v;
      return <path key={i} d={`M${x - half} ${y(m) + 0.5}H${x + half}M${x} ${y(hi)}V${y(lo)}`} stroke="#000" />;
    }
    const [t, bt, hi, lo] = b.v;
    return (
      <g key={i} stroke="#000">
        <path d={`M${x} ${y(hi)}V${y(lo) + 1}`} />
        <rect x={x - half + 0.5} y={y(t) + 0.5} width={half * 2 - 1} height={Math.max(1, y(bt) - y(t))} fill={fills[b.kind]} />
      </g>
    );
  });
}
function Bars({ data, x0, step, half, top, base }) {
  const y = (v) => Math.round((v - top) / 3);
  return data.map((b, i) => {
    const x = Math.floor(x0 + i * step) + 0.5;
    const t = y(b.v[0]);
    return (
      <rect key={i} x={x - half} y={t + 0.5} width={half * 2} height={Math.max(1, base - t)}
        fill={fills[b.kind]} stroke={b.kind === "g" ? "#1e8a26" : "#8f2a2a"} />
    );
  });
}

function ChartWindow({ cfg, active, ...rest }) {
  const { w, priceH, volH } = cfg;
  const grid = (h, lines, shade) => (
    <>
      {cfg.shade.map(([a, b]) => <rect key={a} x={a} width={b - a} height={h} fill={`url(#${cfg.id}-${shade})`} />)}
      <path d={cfg.grid.map((x) => `M${x + 0.5} 0V${h}`).join("") + lines.map((v) => `M0 ${v + 0.5}H${w}`).join("")} stroke="#000" strokeOpacity="0.1" fill="none" />
      <path d={cfg.days.map((x) => `M${x + 0.5} 0V${h}`).join("")} stroke="#c0c0c0" />
    </>
  );
  return (
    <Window active={active} {...rest}>
      <Toolbar>
        <Gap $size={cfg.edge} />
        <Select value={cfg.range} w={86} label="Période affichée" />
        <Gap $size={1} />
        <Select value={cfg.unit} w={89} label="Unité de temps" />
        <Gap $size={1} />
        <IconButton $w={50} $h={28} aria-label="Indicateurs"><Indicators /></IconButton>
        <Gap $size={cfg.edge} />
        <ToolGroup $gap={cfg.gap}>
          <ToolGroup $gap={4}>
            <Bracket />
            <IconButton $w={20} $h={20} aria-label="Réglages"><Wrench size={15} fill="#fff" strokeWidth={2} /></IconButton>
            <Select value="LIMITE Quantité" w={cfg.orderWidth} label="Type d'ordre" />
          </ToolGroup>
          <Spin value="2800" w={70} h={20} label="Quantité" />
          <IconButton $w={30} $h={30} aria-label="Carnet"><SplitDoc /></IconButton>
        </ToolGroup>
      </Toolbar>
      <Summary />
      <ChartGrid>
        <Plot $h={priceH}>
          <svg width="100%" height={priceH} viewBox={`1 1 ${w - 2} ${priceH}`} preserveAspectRatio="none">
            <linearGradient id={`${cfg.id}-price`} x1="0" y1="0" x2="0" y2="1">
              <stop offset="0" stopColor="#fbfbfb" />
              <stop offset="1" stopColor="#e6e6e6" />
            </linearGradient>
            {grid(priceH, cfg.levels, "price")}
            <Candles data={cfg.candles} x0={cfg.x0} step={cfg.step} half={cfg.half} top={cfg.priceTop} />
            {cfg.curves.map((pts, i) => <path key={i} d={smooth(pts)} fill="none" stroke="#8c8c8c" strokeWidth="1.2" />)}
            <path d={`M${cfg.last[0]} ${cfg.last[1]}H${w}`} stroke="#0808c8" strokeWidth="2" />
          </svg>
          <PlotTools>
            Prix<Wrench size={13} strokeWidth={2} /><PanelIcon /><CloseDot /><DocArrow /><DocArrow down />
          </PlotTools>
          {cfg.tags.map(([text, top]) => <OrderTag key={text} text={text} top={top} />)}
          {cfg.position && (
            <PositionTag style={{ top: 175 }}>
              <TagPart $tone="green">276@18,095</TagPart>
              <TagClose aria-label="Clôturer"><DocX /></TagClose>
              <TagPart $tone="red">-0,045</TagPart>
            </PositionTag>
          )}
          <Credit>© ProRealTime.com <i>Données en temps réel</i></Credit>
        </Plot>
        <Axis>
          {cfg.priceLabels.map(([t, y, kind]) => <Pin key={t} $side $mark={kind === "mark"} style={{ top: y }}>{t}</Pin>)}
        </Axis>
        <Plot $h={volH}>
          <svg width="100%" height={volH} viewBox={`1 1 ${w - 2} ${volH}`} preserveAspectRatio="none">
            <linearGradient id={`${cfg.id}-vol`} x1="0" y1="0" x2="0" y2="1">
              <stop offset="0" stopColor="#e6e6e6" />
              <stop offset="1" stopColor="#d8d8d8" />
            </linearGradient>
            {grid(volH, cfg.volLevels, "vol")}
            <Bars data={cfg.volumes} x0={cfg.x0} step={cfg.step} half={cfg.volHalf} top={cfg.volTop} base={volH - 1} />
          </svg>
          <PlotTools>
            Volume<Wrench size={13} strokeWidth={2} /><PanelIcon /><CloseDot />
          </PlotTools>
        </Plot>
        <Axis>
          {cfg.volLabels.map(([t, y, kind]) => (
            <Pin key={t} $side $mark={kind === "mark"} $strong={kind === "b"} style={{ top: y }}>{t}</Pin>
          ))}
        </Axis>
        <Axis>
          {cfg.times.map(([t, x, strong]) => (
            <Pin key={x} $below $strong={strong} style={{ left: `${(x / w) * 100}%` }}>{t}</Pin>
          ))}
          {cfg.date && <DatePin>{cfg.date}</DatePin>}
        </Axis>
      </ChartGrid>
      <BottomBar pressed={cfg.linked} track={cfg.track} />
    </Window>
  );
}
const BarBox = styled.div`
  display: flex;
  align-items: center;
  flex: none;
  gap: 10px;
  height: 29px;
  margin-left: 1px;
  padding: 0 4px 0 5px;
  border: 1px solid ${c.line};
  border-radius: 5px;
  background: linear-gradient(#fff, #fff 55%, #ececec 60%, #f4f4f4);
`;
const HScroll = styled.div`
  display: flex;
  flex: 1;
  height: 16px;
  background: linear-gradient(#f4f4f4, #ececec);
  border: 1px solid #c4c4c4;
  border-radius: 4px;
  button { height: 14px; width: 15px; border-width: 0 1px; }
`;
const BottomBar = ({ pressed, track }) => (
  <BarBox>
    <BareButton aria-label="Envoyer"><Envelope /></BareButton>
    <BareButton aria-label="Imprimer"><Printer /></BareButton>
    {pressed ? (
      <IconButton $pressed $w={24} $h={25} aria-label="Lier"><Chain /></IconButton>
    ) : (
      <BareButton aria-label="Lier"><Chain off /></BareButton>
    )}
    <BareButton aria-label="Liste"><Checklist /></BareButton>
    <BareButton aria-label="Carnet"><BookIcon /></BareButton>
    <HScroll>
      <ScrollButton aria-label="Gauche"><Triangle dir="left" /></ScrollButton>
      <Gap $size={track[0]} />
      <Thumb $size={track[1]}><Grip /></Thumb>
      <Gap $size={track[2]} />
      <ScrollButton aria-label="Droite"><Triangle dir="right" /></ScrollButton>
    </HScroll>
    <BareButton aria-label="Style"><CandleTool /></BareButton>
    <BareButton aria-label="Ajuster"><Lens /></BareButton>
    <BareButton aria-label="Dézoomer"><Lens sign="-" /></BareButton>
    <BareButton aria-label="Zoomer"><Lens sign="+" /></BareButton>
  </BarBox>
);

const intraday = {
  id: "intraday", w: 633, priceH: 252, volH: 116,
  range: "2 jours", unit: "15 minutes", orderWidth: 123, gap: 10, edge: 0.85,
  shade: [[0, 149], [375, 603]],
  grid: [51, 103, 174, 226, 278, 329, 401, 453, 505, 556, 628],
  days: [149, 375, 603],
  levels: [38, 110, 181], volLevels: [24, 47, 69, 92],
  candles: candles15, volumes: volumes15, x0: 5.6, step: 6.482, half: 2.5, volHalf: 2, priceTop: 236, volTop: 6,
  curves: [
    [[0, 20], [115, 18], [162, 11], [211, 0]],
    [[0, 66], [104, 62], [149, 57], [226, 43], [278, 26], [322, 0]],
    [[0, 109], [105, 106], [149, 103], [226, 91], [290, 70], [342, 42], [405, 0]],
    [[0, 153], [105, 150], [160, 145], [226, 134], [290, 115], [342, 94], [405, 56], [490, 0]],
    [[82, 195], [149, 191], [205, 184], [284, 162], [342, 141], [375, 124], [427, 92], [475, 61], [505, 44], [542, 30], [589, 25]],
  ],
  last: [589, 25],
  tags: [["45@19,650", 0], ["51@19,250", 44], ["53@18,850", 88], ["54@18,450", 132]],
  position: true,
  priceLabels: [["18", 39], ["18,050", 32, "mark"], ["17,5", 111], ["17", 182]],
  volLabels: [["50 000", 7, "b"], ["40 000", 25], ["30 000", 48], ["20 000", 70], ["10 000", 93], ["12 834", 87, "mark"]],
  times: [["14:00", 51], ["16:00", 103], ["16", 148, true], ["10:00", 174], ["12:00", 226], ["14:00", 278], ["16:00", 329], ["17", 375, true], ["10:00", 401], ["12:00", 453], ["14:00", 505], ["16:00", 556], ["18", 602, true]],
  track: [267, 134, 0],
};
const daily = {
  id: "daily", w: 1090, priceH: 172, volH: 70,
  range: "200 unités", unit: "Journalier", orderWidth: 174, gap: 23, edge: 0.79,
  shade: [],
  grid: [8, 42, 76, 109, 143, 211, 245, 279, 313, 347, 381, 415, 449, 483, 517, 551, 585, 619, 686, 720, 754, 788, 822, 856, 890, 924, 958, 992, 1026, 1060],
  days: [166, 404, 652, 901],
  levels: [2, 29, 57, 85, 112, 140, 167], volLevels: [5, 26, 48],
  candles: candlesDay, volumes: volumesDay, x0: 8.4, step: 11.307, half: 4.5, volHalf: 4.5, priceTop: 252, volTop: 774,
  curves: [
    [[80, 46], [197, 50], [332, 57], [449, 68], [551, 83], [653, 103], [720, 115], [796, 127], [890, 136], [992, 140], [1090, 140]],
    [[80, 91], [332, 96], [551, 112], [664, 125], [788, 136], [890, 139], [992, 143], [1090, 143]],
    [[80, 135], [332, 137], [652, 142], [890, 145], [992, 146], [1090, 146]],
    [[705, 172], [754, 165], [821, 155], [892, 151], [992, 148], [1090, 148]],
    [[773, 172], [832, 162], [892, 155], [992, 150], [1026, 150]],
    [[819, 172], [892, 159], [992, 152], [1026, 151]],
  ],
  last: [1026, 151],
  tags: [["68@20,050", 27], ["50@19,650", 71], ["51@19,250", 115]],
  priceLabels: [["45", 6], ["40", 30], ["35", 58], ["30", 86], ["25", 113], ["20", 141], ["15", 166], ["18,050", 151, "mark"]],
  volLabels: [["3 000K", 8], ["2 000K", 27], ["1 000K", 49], ["374 701", 60, "mark"]],
  times: [["17", 42], ["22", 76], ["27", 109], ["30", 143], ["août", 166, true], ["07", 211], ["12", 245], ["17", 279], ["20", 313], ["25", 347], ["28", 381], ["sept.", 404, true], ["07", 449], ["10", 483], ["15", 517], ["18", 551], ["23", 585], ["28", 619], ["oct.", 652, true], ["06", 686], ["09", 720], ["14", 754], ["19", 788], ["22", 822], ["27", 856], ["nov.", 901, true], ["04", 924], ["09", 958], ["12", 992], ["20", 1060]],
  date: "17 nov. 2015",
  linked: true,
  track: [679, 166, 12],
};

/* ---------- time and sales ---------- */
const Heading = styled.h2`
  height: ${(p) => p.$h}px;
  line-height: ${(p) => p.$h}px;
  flex: none;
  text-align: center;
`;
const ListArea = styled.div`
  display: flex;
  flex: none;
  ${(p) => p.$h && `height: ${p.$h}px;`}
  overflow: hidden;
`;
const ListScroll = styled(Scroll)`
  margin-top: 15px;
`;
const ListFooter = styled.div`
  display: flex;
  justify-content: center;
  align-items: center;
  gap: 5px;
  flex: none;
  height: 26px;
`;
const Orb = styled.i`
  position: absolute;
  left: 11px;
  bottom: -22px;
  width: 28px;
  height: 28px;
  border: 2px solid #234e7d;
  border-radius: 50%;
  background: #9cc4e6;
`;
function TradesWindow() {
  const vols = ["369", "1", "600", "77", "141", "425", "679", "993", "2 365", "1", "154", "500", "454", "16", "820", "145", "138"];
  return (
    <Window parts={["FAGRON - List..."]} $width={219} titleHeight={28} $pad="0 3px 6px 2px">
      <Heading $h={15}>FAGRON (FAGR)</Heading>
      <ListArea $h={287}>
        <Table>
          <Cols widths={[65, 63, 69]} />
          <thead><tr><th><ArrowGlyph down />Heure</th><th>Prix</th><th>Volume</th></tr></thead>
          <tbody>
            {vols.map((v, i) => (
              <Row key={i} $odd={i % 2}><Cell>17:34:59</Cell><Cell $right>18,050</Cell><Cell $right>{v}</Cell></Row>
            ))}
          </tbody>
        </Table>
        <ListScroll>
          <ScrollButton aria-label="Monter"><Triangle dir="up" /></ScrollButton>
          <Thumb $size="0 0 8px"><Grip /></Thumb>
          <Gap $size={1} />
          <ScrollButton aria-label="Descendre"><Triangle /></ScrollButton>
        </ListScroll>
      </ListArea>
      <ListFooter>
        <IconButton $pressed $w={25} $h={25} aria-label="Lier"><Chain /></IconButton>
        <PushButton>Fermer</PushButton>
      </ListFooter>
      <Orb />
    </Window>
  );
}

/* ---------- screener ---------- */
const BigTabs = styled.div`
  display: flex;
  flex: none;
  height: 22px;
  margin-bottom: 3px;
`;
const BigTab = styled.button`
  flex: ${(p) => (p.$on ? "149" : "135")};
  white-space: nowrap;
  border: 1px solid ${c.line};
  border-radius: 4px;
  background: ${(p) => (p.$on ? "#fff" : "linear-gradient(#fff, #f4f4f4 50%, #e4e4e4 52%)")};
  font-weight: ${(p) => (p.$on ? "bold" : "normal")};
`;
const Status = styled.div`
  display: flex;
  align-items: center;
  gap: 4px;
  height: 21px;
  padding-left: 6px;
  border-top: 1px solid #ccc;
  background: linear-gradient(#fff, #eaeaea);
`;
const screener = `MASTRAD|15,53|1,86|175 762
CATERING INT...|9,56|14,32|283 965
PARROT|7,95|33,69|1 116k|r
CELLECTIS|7,93|34,18|22 129k
CELYAD|7,53|41,545|2 125k
FAGRON|7,38|18,050|6 763k
GENFIT|7,11|41,150|32 686k|r
RANDSTAD|6,9|57,32|86 248k
TRIGANO|6,27|44,90|500 590
PEUGEOT BS...|5,88|3,370|756 285
COFACE|5,53|8,891|1 709k
SOITEC|5,33|0,79|1 238k
QUANTUM GE...|4,95|8,69|124 293
ILIAD|4,88|211,60|64 346k
FUGRO|4,51|17,385|12 008k
SUEZ ENVIRO...|4,41|17,895|73 758k
FOCUS HOME ...|4,37|20,80|111 883|r
HIGH CO|4,35|6,60|234 141|r
CORTICEIRA ...|4,31|5,466|313 885
AIRBUS GROUP|4,27|66,17|196M
JACQUET MET...|4,19|14,300|206 921
VAN DE VELDE|4,13|58,04|893 932
BRUNEL INTE...|4,09|17,800|1 121k
ONCODESIGN|4,09|17,07|780 167
NOS, SGPS|4,02|7,427|6 264k
SEQUANA|4,02|3,62|735 493
SONAE CAPIT...|3,99|0,443|271 430
ZODIAC AER...|3,98|24,795|21 127k
EDENRED|3,9|17,310|13 744k
VINCI|3,86|61,83|140M
ROYAL DUTC...|3,84|23,675|88 047
KENDRION|3,78|20,300|808 731
TOTAL|3,75|46,455|330M
CAP GEMINI|3,72|83,99|65 957k
ESSO|3,7|56,00|289 968`.split("\n").map((l) => l.split("|"));

function ScreenerWindow() {
  return (
    <Window parts={["ProScreener - Forte volatilite..."]} $top $pad="0 4px 0 7px" titleHeight={28}>
      <BigTabs>
        <BigTab $on>Forte volatilite et volumes</BigTab>
        <BigTab>Gestion ProScreeners</BigTab>
      </BigTabs>
      <ListArea>
        <Table>
          <Cols widths={[19, 90, 54, 54, 51]} />
          <thead>
            <tr><th><HeadWrench /></th><th>Nom</th><th><ArrowGlyph />var</th><th>Dernier</th><th>Capital</th></tr>
          </thead>
          <tbody>
            {screener.map(([name, v, last, cap, tone], i) => {
              const color = tone ? c.red : c.green;
              return (
                <Row key={name} $odd={i % 2} $selected={name === "FAGRON"}>
                  <IconCell><ChainChart /></IconCell>
                  <Cell>{name}</Cell>
                  <Cell $right $color={color}>{v}</Cell>
                  <Cell $right $color={color}>{last} (c)</Cell>
                  <Cell $right $color={color}>{cap}</Cell>
                </Row>
              );
            })}
          </tbody>
        </Table>
        <ListScroll>
          <ScrollButton aria-label="Monter"><Triangle dir="up" /></ScrollButton>
          <Thumb $size={364}><Grip /></Thumb>
          <Gap $size={161} />
          <ScrollButton aria-label="Descendre"><Triangle /></ScrollButton>
        </ListScroll>
      </ListArea>
      <Status><Check />Nb résultats : 463 (max 50 affichés)</Status>
    </Window>
  );
}

/* ---------- portfolio ---------- */
const Notice = styled.p`
  padding: 4px 3px;
  flex: none;
`;
const Divider = styled.div`
  display: flex;
  align-items: center;
  flex: none;
  gap: 3px;
  height: 9px;
  padding-left: 5px;
  border: 1px solid #bbb;
  border-radius: 4px;
  background: #fff;
  i { margin: 0 auto; width: 9px; height: 3px; background: repeating-linear-gradient(90deg, #aaa 0 1px, #fff 1px 2px); }
`;
const SplitBar = () => <Divider><Triangle dir="up" size={7} /><Triangle size={7} /><i /></Divider>;
function Portfolio() {
  const accounts = [["Comptant", "6 860,43€", "3 372,60€", "-12,64€"], ["Règlement ...", "46 756,65€", "0,00€", "0,00€"], ["TOTAL", "", "3 372,60€", "-12,64€"]];
  const positions = [["CROSSJ...", "-0,22€", "-270", "-1 609,20€"], ["FAGRON", "-12,42€", "276", "4 981,80€"], ["GALAPA...", "0,00€", "0", ""]];
  return (
    <Window parts={["Portefeuille"]} $grow="1" titleHeight={28} $pad="0 4px 0 9px">
      <Notice>
        Seules les positions des valeurs négociables sur ProRealTime apparaissent dans votre portefeuille. Pour consulter l'ensemble de vos positions, veuillez vous reporter au portefeuille du site Binck.fr
      </Notice>
      <Panel $gap={7} $h={42}>
        <span>Compte :</span><Select value="744294" w={60} label="Compte" /><Printer />
      </Panel>
      <ListArea $h={70}>
        <Table $row={18}>
          <Cols widths={[71, 70, 69, 72]} />
          <thead><tr><th><HeadWrench />Marché</th><th>Espèces/Co...</th><th>Valorisation</th><th>Gains/Pertes</th></tr></thead>
          <tbody>
            {accounts.map((r, i) => (
              <Row key={r[0]} $odd={i % 2}>
                {r.map((t, k) => <Cell key={k} $right={k > 0} $color={k > 0 && i !== 1 ? c.red : undefined}>{t}</Cell>)}
              </Row>
            ))}
          </tbody>
        </Table>
      </ListArea>
      <SplitBar />
      <Heading $h={19}>744294</Heading>
      <Heading $h={18}>Positions Comptant</Heading>
      <ListArea $h={53}>
        <Table>
          <Cols widths={[20, 18, 56, 54, 44, 72]} />
          <thead><tr><th><HeadWrench /></th><th /><th><ArrowGlyph down />Nom</th><th>+/- latente</th><th>Position</th><th>Valorisation ...</th></tr></thead>
          <tbody>
            {positions.map((r, i) => (
              <Row key={r[0]} $odd={i % 2} $selected={i === 1}>
                <IconCell><ChainChart /></IconCell>
                <Cell><DocX grey={i === 2} /></Cell>
                {r.map((t, k) => <Cell key={k} $right={k > 0} $color={k > 0 && i < 2 ? c.red : undefined}>{t}</Cell>)}
              </Row>
            ))}
          </tbody>
        </Table>
        <ListScroll>
          <ScrollButton aria-label="Monter"><Triangle dir="up" /></ScrollButton>
          <Gap $size={1} />
          <ScrollButton aria-label="Descendre"><Triangle /></ScrollButton>
        </ListScroll>
      </ListArea>
      <SplitBar />
      <Heading $h={23}>Positions en Règlement Différé</Heading>
      <Table>
        <Cols widths={[20, 20, 38, 34, 33, 34, 34, 34, 35]} />
        <thead><tr><th><HeadWrench /></th><th /><th>Nom</th><th>Posi...</th><th>Cours</th><th>Prix ...</th><th>+/- l...</th><th>%Var</th><th>+/- v...</th></tr></thead>
      </Table>
    </Window>
  );
}

/* hand-drawn highlight rings over the windows */
const Rings = styled.svg`
  position: absolute;
  z-index: 5;
  top: 0;
  right: 0;
  pointer-events: none;
`;

export default function App() {
  return (
    <>
      <Global />
      <Desktop>
        <Column>
          <OrdersWindow />
          <WindowRow>
            <BookWindow />
            <ChartWindow cfg={intraday} active $grow="701 0 0" parts={["FAGR - FAGRON", "18,050 (+7,38%)", "15 minutes  17 nov. 2015"]} $pad="0 4px 6px 6px" />
          </WindowRow>
          <WindowRow $last>
            <TradesWindow />
            <ChartWindow cfg={daily} $grow="1" parts={["FAGR - FAGRON", "18,050 (+7,38%)", "Journalier  17 nov. 2015"]} $pad="0 7px 0 6px" />
          </WindowRow>
        </Column>
        <Column $width={296}>
          <ScreenerWindow />
          <Portfolio />
        </Column>
        <Rings width="500" height="1016" viewBox="0 0 500 1016" fill="none" stroke={c.orange} strokeWidth="5" aria-hidden>
          <ellipse cx="91.5" cy="426" rx="56" ry="211" />
          <ellipse cx="75" cy="898" rx="38" ry="132" />
          <ellipse cx="343" cy="156" rx="155" ry="19" />
        </Rings>
      </Desktop>
    </>
  );
}
